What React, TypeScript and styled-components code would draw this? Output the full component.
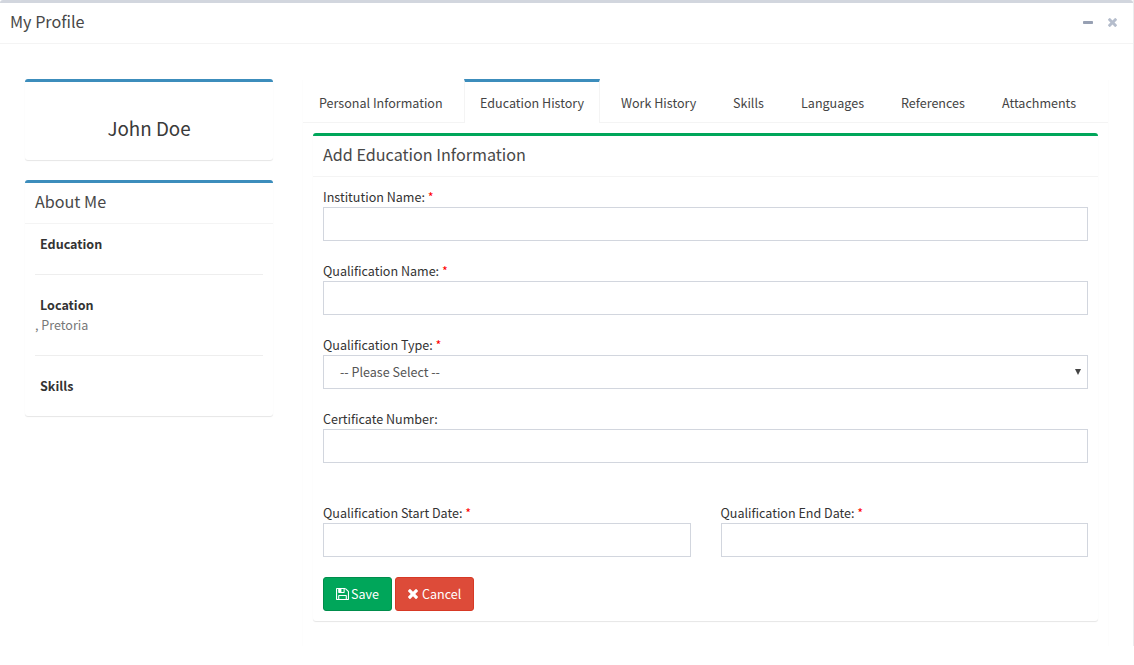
import React from "react";
import styled, { createGlobalStyle } from "styled-components";

const Global = createGlobalStyle`
  * { box-sizing: border-box; }
  body {
    margin: 0;
    background: #fff;
    color: #333;
    font-family: "Noto Sans CJK SC", "Noto Sans", sans-serif;
    font-size: 12.55px;
    line-height: 20px;
  }
  h1, h2, p { margin: 0; font-weight: 400; }
`;

const Page = styled.div`
  width: 1134px;
  height: 646px;
  border-right: 1px solid #ececee;
`;

const Panel = styled.section<{ $accent: string }>`
  border-top: 3px solid ${(p) => p.$accent};
  border-radius: 3px;
  background: #fff;
  box-shadow: 0 1px 1px rgba(0, 0, 0, 0.1);
`;

const MainPanel = styled(Panel)`
  height: 646px;
  box-shadow: none;
`;

const PanelHeader = styled.header`
  display: flex;
  align-items: center;
  justify-content: space-between;
  height: 41px;
  padding: 0 10px 5px;
  border-bottom: 1px solid #f4f4f4;
`;

const Title = styled.h1`
  font-size: 16.15px;
  line-height: 18px;
  color: #484848;
`;

const Tools = styled.div`
  display: flex;
  align-items: center;
  gap: 15px;
  padding: 4px 6px 0 0;
`;

const Columns = styled.div`
  display: flex;
  align-items: flex-start;
  gap: 30px;
  padding: 35px 25px 0;
`;

const Sidebar = styled.aside`
  display: flex;
  flex-direction: column;
  gap: 20px;
  width: 248px;
`;

const NameCard = styled(Panel)`
  height: 81px;
  padding-top: 34px;
`;

const Name = styled.h2`
  font-size: 18.8px;
  line-height: 23px;
  text-align: center;
  color: #3a3a3a;
`;

const AboutCard = styled(Panel)`
  height: 236px;
`;

const AboutBody = styled.div`
  padding: 10px;
`;

const AboutItem = styled.div`
  padding-bottom: 20px;
  & + & {
    border-top: 1px solid #eee;
    padding-top: 20px;
  }
`;

const AboutLabel = styled.p`
  padding-left: 5px;
  font-weight: 700;
`;

const AboutText = styled.p`
  color: #777;
`;

const Tabbed = styled.main`
  width: 805px;
  height: 567px;
  box-shadow: 0 1px 1px rgba(0, 0, 0, 0.05);
  clip-path: inset(0 -2px 0 -2px);
`;

const Tabs = styled.nav`
  display: flex;
  gap: 5px;
  height: 44px;
  border-bottom: 1px solid #f4f4f4;
`;

const Tab = styled.a<{ $w: number; $active?: boolean }>`
  flex: none;
  width: ${(p) => p.$w}px;
  height: 44px;
  padding: 11px 0 0 ${(p) => (p.$active ? 15 : 16)}px;
  border-top: 3px solid ${(p) => (p.$active ? "#3c8dbc" : "transparent")};
  border-left: ${(p) => (p.$active ? "1px solid #f4f4f4" : "0")};
  border-right: ${(p) => (p.$active ? "1px solid #f4f4f4" : "0")};
  background: ${(p) => (p.$active ? "#fff" : "transparent")};
  color: #444;
  white-space: nowrap;
`;

const TabContent = styled.div`
  padding: 10px;
`;

const FormPanel = styled(Panel)`
  height: 488px;
`;

const Form = styled.form`
  padding: 10px;
`;

const Field = styled.div<{ $gap?: number }>`
  flex: 1;
  margin-bottom: ${(p) => p.$gap ?? 20}px;
`;

const Label = styled.label`
  display: block;
  height: 20px;
`;

const Star = styled.span`
  color: #f00;
`;

const Input = styled.input`
  display: block;
  width: 100%;
  height: 34px;
  padding: 6px 12px;
  border: 1px solid #d2d6de;
  background: #fff;
  font: inherit;
`;

const Select = styled.div`
  display: flex;
  align-items: center;
  justify-content: space-between;
  height: 34px;
  padding: 0 6px 0 16px;
  border: 1px solid #d2d6de;
  color: #555;
`;

const Row = styled.div`
  display: flex;
  gap: 30px;
`;

const Buttons = styled.div`
  display: flex;
  gap: 3px;
`;

const Button = styled.button<{ $bg: string; $edge: string; $w: number; $gap: number }>`
  display: flex;
  align-items: center;
  gap: ${(p) => p.$gap}px;
  width: ${(p) => p.$w}px;
  height: 34px;
  padding: 0 0 0 12px;
  border: 1px solid ${(p) => p.$edge};
  border-radius: 3px;
  background: ${(p) => p.$bg};
  color: #fff;
  font: inherit;
  white-space: nowrap;
`;

const TimesIcon = ({ size, color }: { size: number; color: string }) => (
  <svg width={size} height={size} viewBox="302 366 1188 1188" fill={color}>
    <path d="M1490 1322q0 40-28 68l-136 136q-28 28-68 28t-68-28l-294-294-294 294q-28 28-68 28t-68-28l-136-136q-28-28-28-68t28-68l294-294-294-294q-28-28-28-68t28-68l136-136q28-28 68-28t68 28l294 294 294-294q28-28 68-28t68 28l136 136q28 28 28 68t-28 68l-294 294 294 294q28 28 28 68z" />
  </svg>
);

const MinusIcon = () => (
  <svg width="10" height="3" viewBox="0 0 10 3">
    <rect width="10" height="3" rx="0.8" fill="#97a0b3" />
  </svg>
);

const SaveIcon = () => (
  <svg width="13" height="12" viewBox="0 128 1536 1536" preserveAspectRatio="none" fill="#fff">
    <path d="M384 1536h768v-384h-768v384zm896 0h128v-896q0-14-10-38.500t-20-34.500l-281-281q-10-10-34-20t-39-10v416q0 40-28 68t-68 28h-576q-40 0-68-28t-28-68v-416h-128v1280h128v-416q0-40 28-68t68-28h832q40 0 68 28t28 68v416zm-384-928v-320q0-13-9.500-22.500t-22.500-9.500h-192q-13 0-22.500 9.500t-9.500 22.500v320q0 13 9.500 22.500t22.500 9.500h192q13 0 22.500-9.500t9.500-22.500zm640 32v928q0 40-28 68t-68 28h-1344q-40 0-68-28t-28-68v-1344q0-40 28-68t68-28h928q40 0 88 20t76 48l280 280q28 28 48 76t20 88z" />
  </svg>
);

const CaretIcon = () => (
  <svg width="6" height="6" viewBox="0 0 6 6">
    <path d="M0 0h6L3 6z" fill="#444" />
  </svg>
);

const tabs = [
  { name: "Personal Information", width: 156 },
  { name: "Education History", width: 136, active: true },
  { name: "Work History", width: 107 },
  { name: "Skills", width: 63 },
  { name: "Languages", width: 95 },
  { name: "References", width: 96 },
  { name: "Attachments", width: 107 },
];

const FieldLabel = ({ text, required }: { text: string; required?: boolean }) => (
  <Label>
    {text} {required && <Star>*</Star>}
  </Label>
);

export default function App() {
  return (
    <Page>
      <Global />
      <MainPanel $accent="#d2d6de">
        <PanelHeader>
          <Title>My Profile</Title>
          <Tools>
            <MinusIcon />
            <TimesIcon size={9} color="#b5bdcc" />
          </Tools>
        </PanelHeader>
        <Columns>
          <Sidebar>
            <NameCard $accent="#3c8dbc">
              <Name>John Doe</Name>
            </NameCard>
            <AboutCard $accent="#3c8dbc">
              <PanelHeader>
                <Title as="h2">About Me</Title>
              </PanelHeader>
              <AboutBody>
                <AboutItem>
                  <AboutLabel>Education</AboutLabel>
                </AboutItem>
                <AboutItem>
                  <AboutLabel>Location</AboutLabel>
                  <AboutText>, Pretoria</AboutText>
                </AboutItem>
                <AboutItem>
                  <AboutLabel>Skills</AboutLabel>
                </AboutItem>
              </AboutBody>
            </AboutCard>
          </Sidebar>
          <Tabbed>
            <Tabs>
              {tabs.map((t) => (
                <Tab key={t.name} $w={t.width} $active={t.active}>
                  {t.name}
                </Tab>
              ))}
            </Tabs>
            <TabContent>
              <FormPanel $accent="#00a65a">
                <PanelHeader>
                  <Title as="h2">Add Education Information</Title>
                </PanelHeader>
                <Form>
                  <Field>
                    <FieldLabel text="Institution Name:" required />
                    <Input />
                  </Field>
                  <Field>
                    <FieldLabel text="Qualification Name:" required />
                    <Input />
                  </Field>
                  <Field>
                    <FieldLabel text="Qualification Type:" required />
                    <Select>
                      -- Please Select --
                      <CaretIcon />
                    </Select>
                  </Field>
                  <Field $gap={40}>
                    <FieldLabel text="Certificate Number:" />
                    <Input />
                  </Field>
                  <Row>
                    <Field>
                      <FieldLabel text="Qualification Start Date:" required />
                      <Input />
                    </Field>
                    <Field>
                      <FieldLabel text="Qualification End Date:" required />
                      <Input />
                    </Field>
                  </Row>
                  <Buttons>
                    <Button type="button" $bg="#00a65a" $edge="#008d4c" $w={69} $gap={2}>
                      <SaveIcon />
                      Save
                    </Button>
                    <Button type="button" $bg="#dd4b39" $edge="#d73925" $w={79} $gap={4}>
                      <TimesIcon size={10} color="#fff" />
                      Cancel
                    </Button>
                  </Buttons>
                </Form>
              </FormPanel>
            </TabContent>
          </Tabbed>
        </Columns>
      </MainPanel>
    </Page>
  );
}
